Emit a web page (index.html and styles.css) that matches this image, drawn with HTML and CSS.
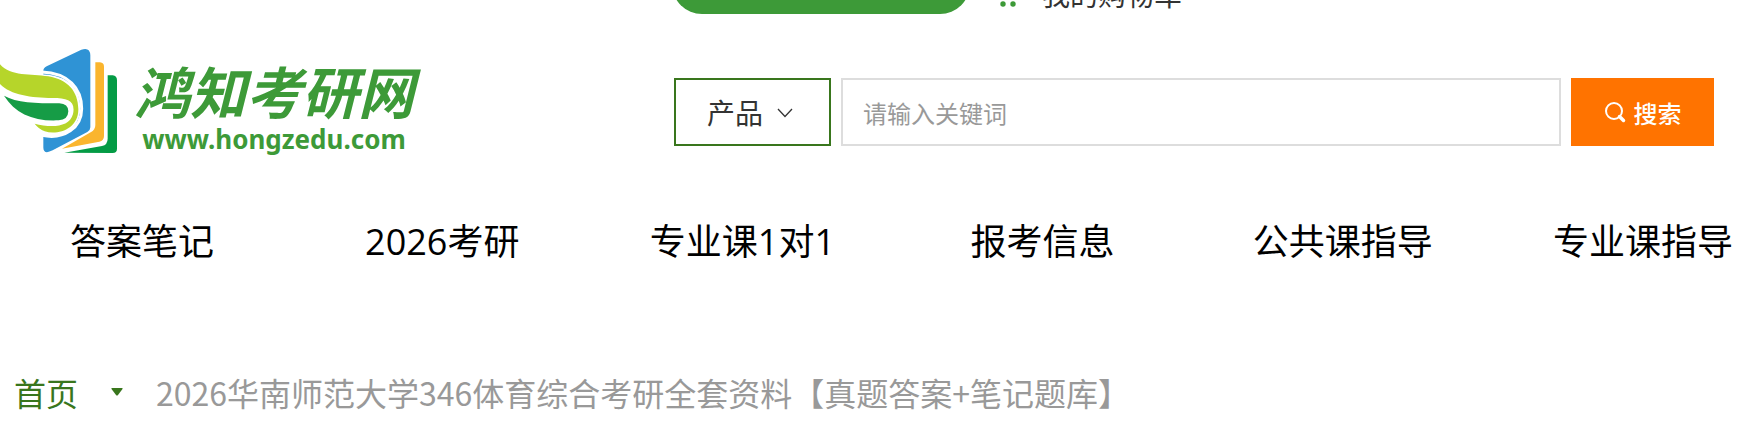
FILE: index.html
```html
<!DOCTYPE html>
<html lang="zh-CN">
<head>
  <meta charset="UTF-8">
  <meta name="viewport" content="width=device-width, initial-scale=1.0">
  <title>鸿知考研网</title>
  <link rel="stylesheet" href="styles.css">
</head>
<body>

<!-- Top bar -->
<div class="top-bar">
  <div class="top-pill"></div>
  <a class="cart" href="#">
    <svg class="cart-icon" width="28" height="28" viewBox="0 0 28 28" aria-hidden="true">
      <path d="M2 3h4l3 14h13l3-10H7" fill="none" stroke="#3d9a38" stroke-width="2"/>
      <circle cx="9" cy="24" r="2.700" fill="#3d9a38"/>
      <circle cx="19" cy="24" r="2.700" fill="#3d9a38"/>
    </svg>
    <span>我的购物车</span>
  </a>
</div>

<!-- Logo and search -->
<header class="header">
  <a class="logo" href="#">
    <svg class="logo-mark" width="130" height="120" viewBox="0 0 390 360" aria-hidden="true">
      <path d="M193 338 L306 318 Q323 314 323 296 V106 H338 Q351 107 351 121 V326 Q351 339 338 339 Z" fill="#049b45"/>
      <path d="M186 326 L272 277 Q286 270 286 255 V67 H300 Q312 68 312 80 V288 Q312 302 298 305 Z" fill="#fab52e"/>
      <path d="M130 94 Q129 85 140 79 L244 29 Q270 20 271 46 V262 Q271 271 262 276 L158 331 Q131 345 130 323 Z" fill="#2f93d5"/>
      <path d="M-4 70 C30 108 97 96 154 106 C213 116 241 153 241 204 C241 255 199 302 130 286 L92 242 L10 164 L-4 132 Z" fill="#fff"/>
      <path d="M126 96 C205 99 245 145 245 206 C245 263 193 300 126 286" fill="none" stroke="#fff" stroke-width="9"/>
      <path d="M-2 70 C30 110 91 100 145 109 C204 119 234 154 235 207 C236 266 174 287 134 274 Q116 267 104 251 C151 263 208 264 219 222 C227 184 205 174 157 174 C94 174 29 165 -2 130 Z" fill="#b6d52a"/>
      <path d="M12 167 C50 188 105 190 178 190 Q205 192 205 214 Q204 240 176 241 C102 245 46 221 12 167 Z" fill="#169c46"/>
    </svg>
    <span class="logo-text">
      <span class="logo-name">鸿知考研网</span>
      <span class="logo-url">www.hongzedu.com</span>
    </span>
  </a>

  <form class="search" id="searchForm">
    <div class="search-type">
      <select id="type" name="type" aria-label="类型">
        <option value="product">产品</option>
      </select>
      <svg class="arrow" width="16" height="10" viewBox="0 0 16 10" aria-hidden="true">
        <path d="M1 1l7 7.500 7-7.500" fill="none" stroke="#333" stroke-width="1.300"/>
      </svg>
    </div>
    <input type="text" id="keyword" name="keyword" placeholder="请输入关键词" aria-label="关键词">
    <button type="submit" class="search-btn">
      <svg width="22" height="22" viewBox="0 0 22 22" aria-hidden="true">
        <circle cx="10" cy="10" r="8" fill="none" stroke="#fff" stroke-width="2"/>
        <path d="M15.500 15.500l4 4" stroke="#fff" stroke-width="3.500" stroke-linecap="round"/>
      </svg>
      <span>搜索</span>
    </button>
  </form>
</header>

<!-- Main navigation -->
<nav class="nav">
  <a href="#">答案笔记</a>
  <a href="#">2026考研</a>
  <a href="#">专业课1对1</a>
  <a href="#">报考信息</a>
  <a href="#">公共课指导</a>
  <a href="#">专业课指导</a>
</nav>

<!-- Breadcrumb -->
<div class="breadcrumb">
  <a href="#">首页</a>
  <svg width="12" height="8" viewBox="0 0 12 8" aria-hidden="true">
    <path d="M1 0h10q1 0 .500 1L7 7q-1 1-2 0L.500 1Q0 0 1 0z" fill="#39761d"/>
  </svg>
  <span>2026华南师范大学346体育综合考研全套资料【真题答案+笔记题库】</span>
</div>

</body>
</html>
```
FILE: styles.css
```css
body {
  margin: 0;
  font-family: "Noto Sans CJK SC", sans-serif;
  color: #333;
  background-color: #fff;
  overflow: hidden;
}

a {
  color: inherit;
  text-decoration: none;
}

/* top bar */
.top-bar {
  display: flex;
  align-items: flex-end;
  gap: 24px;
  height: 60px;
  margin-top: -46px;
  padding-left: 672px;
}

.top-pill {
  width: 298px;
  height: 60px;
  border-radius: 30px;
  background-color: #3d9a38;
}

.cart {
  display: flex;
  align-items: center;
  gap: 20px;
  height: 40px;
  font-size: 28px;
  line-height: 40px;
}

/* header */
.header {
  display: flex;
  align-items: center;
  justify-content: space-between;
  padding: 26px 33px 0 0;
}

.logo {
  display: flex;
  align-items: center;
  gap: 4px;
  color: #3d9a38;
}

.logo-text {
  display: flex;
  flex-direction: column;
  align-items: center;
  padding-top: 12px;
  font-weight: bold;
}

.logo-name {
  font-size: 56px;
  line-height: 66px;
  font-style: italic;
}

.logo-url {
  font-family: "Noto Sans", sans-serif;
  font-size: 26px;
  line-height: 32px;
}

.search {
  display: flex;
  gap: 10px;
  width: 1040px;
  height: 68px;
  margin-top: 24px;
}

.search-type {
  position: relative;
  width: 157px;
}

.search-type select {
  width: 100%;
  height: 100%;
  padding: 0 0 0 31px;
  border: 2px solid #39761d;
  border-radius: 0;
  background-color: #fff;
  color: #333;
  font-family: inherit;
  font-size: 28px;
  appearance: none;
}

.arrow {
  position: absolute;
  top: 30px;
  right: 38px;
  pointer-events: none;
}

.search input {
  flex: 1;
  min-width: 0;
  box-sizing: border-box;
  padding: 0 20px;
  border: 2px solid #ddd;
  font-family: inherit;
  font-size: 24px;
}

.search input::placeholder {
  color: #999;
}

.search input:focus {
  outline: none;
}

.search-btn {
  display: flex;
  align-items: center;
  justify-content: center;
  gap: 8px;
  width: 143px;
  padding: 0;
  border: none;
  background-color: #ff7300;
  color: #fff;
  font-family: inherit;
  font-size: 24px;
  font-weight: 500;
  cursor: pointer;
}

/* nav */
.nav {
  display: grid;
  grid-template-columns: repeat(6, 1fr);
  margin: 42px -46px 0 -8px;
  font-family: "Open Sans", "Noto Sans CJK SC", sans-serif;
  font-size: 36px;
  line-height: 80px;
  text-align: center;
  color: #000;
}

/* breadcrumb */
.breadcrumb {
  display: flex;
  align-items: center;
  gap: 33px;
  padding: 86px 14px 0;
  font-size: 32px;
  line-height: 48px;
  color: #999;
}

.breadcrumb a {
  color: #39761d;
}
```
